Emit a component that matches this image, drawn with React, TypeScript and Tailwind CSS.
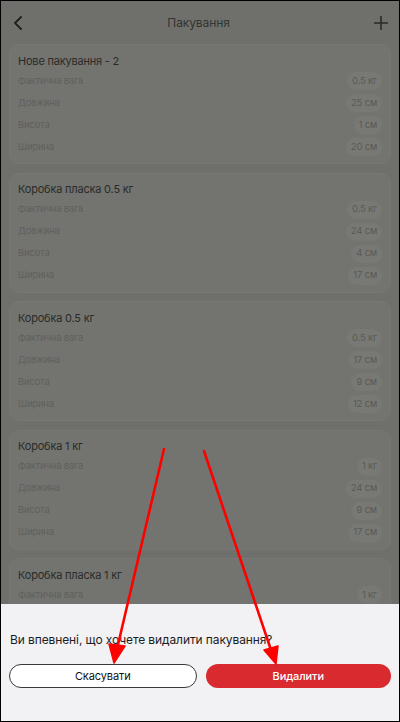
const packages = [
  { name: "Нове пакування - 2", weight: "0.5 кг", length: "25 см", height: "1 см", width: "20 см" },
  { name: "Коробка пласка 0.5 кг", weight: "0.5 кг", length: "24 см", height: "4 см", width: "17 см" },
  { name: "Коробка 0.5 кг", weight: "0.5 кг", length: "17 см", height: "9 см", width: "12 см" },
  { name: "Коробка 1 кг", weight: "1 кг", length: "24 см", height: "9 см", width: "17 см" },
  { name: "Коробка пласка 1 кг", weight: "1 кг", length: "24 см", height: "5 см", width: "17 см" },
]

function Row({ label, value }: { label: string; value: string }) {
  return (
    <div className="flex h-[22px] items-center justify-between">
      <span className="text-[9.5px] tracking-[-0.2px] text-[#5f605c]">{label}</span>
      <span className="flex h-[18px] items-center rounded-full bg-[#787975] px-[5px] text-[9.5px] tracking-[-0.2px] text-[#585955]">
        {value}
      </span>
    </div>
  )
}

export default function App() {
  return (
    <div
      className="relative h-[722px] w-[400px] overflow-hidden border border-black bg-[#6f706c]"
      style={{ fontFamily: "Inter, 'Noto Sans', sans-serif" }}
    >
      <div className="flex h-[43px] items-center justify-between px-[12px]">
        <svg width="10" height="14" viewBox="0 0 10 14" fill="none">
          <path d="M8 1L2 7l6 6" stroke="#1f1f1e" strokeWidth="1.8" strokeLinecap="round" strokeLinejoin="round" />
        </svg>
        <span className="text-[12px] tracking-[-0.1px] text-[#333431]">Пакування</span>
        <svg width="14" height="14" viewBox="0 0 14 14" fill="none" className="mr-[-1px]">
          <path d="M7 0.5v13M0.5 7h13" stroke="#2a2a29" strokeWidth="1.6" strokeLinecap="round" />
        </svg>
      </div>

      <div className="flex flex-col gap-[8.5px] px-[8px]">
        {packages.map((p) => (
          <div key={p.name} className="rounded-[10px] border border-[#777874] bg-[#737470] px-[8px] pb-[5px] pt-[7px]">
            <div className="flex h-[18px] items-center text-[11px] tracking-[-0.2px] text-[#2a2b29]">{p.name}</div>
            <Row label="Фактична вага" value={p.weight} />
            <Row label="Довжина" value={p.length} />
            <Row label="Висота" value={p.height} />
            <Row label="Ширина" value={p.width} />
          </div>
        ))}
      </div>

      <div className="absolute bottom-0 left-0 right-0 h-[117px] bg-[#f2f2f4] px-[8px] pt-[27px]">
        <p className="px-[1px] text-[12px] tracking-[-0.1px] text-[#1d1d1f]">Ви впевнені, що хочете видалити пакування?</p>
        <div className="mt-[15px] flex gap-[9px]">
          <button className="flex h-[24px] flex-1 items-center justify-center rounded-full border border-[#3a3a3a] bg-white text-[11px] tracking-[-0.1px] text-[#111]">
            Скасувати
          </button>
          <button className="flex h-[24px] flex-1 items-center justify-center rounded-full bg-[#d92b2f] text-[11px] font-medium tracking-[-0.1px] text-white">
            Видалити
          </button>
        </div>
      </div>

      <svg className="pointer-events-none absolute left-0 top-0" width="400" height="722" viewBox="0 0 400 722">
        <path d="M163 448 L116 648" stroke="#ff0000" strokeWidth="2.6" strokeLinecap="round" />
        <path d="M108 643 L113 662 L124 645 Z" fill="#ff0000" stroke="#ff0000" strokeWidth="1.5" strokeLinejoin="round" />
        <path d="M203 450 L270 649" stroke="#ff0000" strokeWidth="2.6" strokeLinecap="round" />
        <path d="M263 649 L275 663 L277 645 Z" fill="#ff0000" stroke="#ff0000" strokeWidth="1.5" strokeLinejoin="round" />
      </svg>
    </div>
  )
}
